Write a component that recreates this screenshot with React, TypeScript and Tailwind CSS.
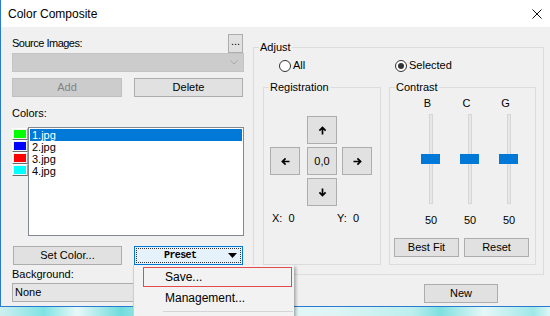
import React from 'react';

type BtnProps = {
  className?: string;
  disabled?: boolean;
  children?: React.ReactNode;
};

function Btn({ className = '', disabled, children }: BtnProps) {
  return (
    <button
      type="button"
      className={`flex items-center justify-center border text-[11px] leading-[13px] ${
        disabled
          ? 'bg-[#cccccc] border-[#bfbfbf] text-[#838383]'
          : 'bg-[#e1e1e1] border-[#adadad] text-black'
      } ${className}`}
    >
      {children}
    </button>
  );
}

function Group({
  label,
  className = '',
  children,
}: {
  label: string;
  className?: string;
  children?: React.ReactNode;
}) {
  return (
    <fieldset className={`border border-[#dcdcdc] m-0 p-0 min-w-0 ${className}`}>
      <legend className="ml-[5px] px-[1px] text-[11px] leading-[13px]">{label}</legend>
      {children}
    </fieldset>
  );
}

function Arrow({ dir }: { dir: 'up' | 'down' | 'left' | 'right' }) {
  const rot = { up: 0, right: 90, down: 180, left: 270 }[dir];
  return (
    <svg width="9" height="9" viewBox="0 0 9 9" style={{ transform: `rotate(${rot}deg)` }}>
      <path d="M4.5 8.5V1.4M1.4 4.6L4.5 1.4L7.6 4.6" fill="none" stroke="#000" strokeWidth="1.7" />
    </svg>
  );
}

function Radio({ checked, label }: { checked?: boolean; label: string }) {
  return (
    <div className="flex items-center gap-[2px] text-[11px] leading-[13px]">
      <span className="w-[12px] h-[12px] rounded-full border border-[#333] bg-white flex items-center justify-center">
        {checked && <span className="w-[6px] h-[6px] rounded-full bg-[#333]" />}
      </span>
      <span>{label}</span>
    </div>
  );
}

function Slider() {
  return (
    <div className="w-[20px] flex flex-col items-center">
      <div className="relative w-[4px] h-[90px] bg-[#e7e7e7] border border-[#d6d6d6] mt-[4px]">
        <div className="absolute left-[-9px] top-[39px] w-[19px] h-[10px] bg-[#0078d7]" />
      </div>
    </div>
  );
}

const swatches = ['#00ff00', '#0000ff', '#ff0000', '#00ffff'];
const files = ['1.jpg', '2.jpg', '3.jpg', '4.jpg'];

export default function App() {
  return (
    <div className="relative w-[550px] h-[316px] overflow-hidden font-['Liberation_Sans',Arial,sans-serif] text-black bg-[linear-gradient(90deg,#cfeff0_0%,#7fe3e3_8%,#e9f8f8_14%,#6fdcdc_22%,#eaf9f9_32%,#dff5f5_60%,#bdeeee_75%,#7fe0e0_80%,#e6f7f7_88%,#9fe8e8_97%,#e0f6f6_100%)]">
      <div className="h-[307px] flex flex-col border-l border-b border-[#2a7ad2]">
        {/* title bar */}
        <div className="h-[27px] bg-white flex items-center justify-between pl-[7px] pr-[8px]">
          <span className="text-[12px] leading-[14px]">Color Composite</span>
          <svg width="10" height="10" viewBox="0 0 10 10">
            <path d="M0.5 0.5L9.5 9.5M9.5 0.5L0.5 9.5" stroke="#111" strokeWidth="1" />
          </svg>
        </div>

        <div className="flex-1 bg-[#f0f0f0] flex pl-[11px]">
          {/* left column */}
          <div className="w-[232px] flex flex-col pt-[7px] text-[11px] leading-[13px]">
            <div className="h-[18px] flex items-center justify-between">
              <span className="tracking-[-0.5px]">Source Images:</span>
              <Btn className="w-[15px] h-[19px] mr-[1px] pb-[3px]">...</Btn>
            </div>
            <div className="mt-[1px] h-[19px] bg-[#cccccc] border border-[#c4c4c4] flex items-center justify-end pr-[5px]">
              <svg width="8" height="5" viewBox="0 0 8 5">
                <path d="M0.5 0.5L4 4L7.5 0.5" fill="none" stroke="#a8a8a8" strokeWidth="1" />
              </svg>
            </div>
            <div className="mt-[6px] flex gap-[12px]">
              <Btn disabled className="w-[110px] h-[19px]">Add</Btn>
              <Btn className="w-[109px] h-[19px]">Delete</Btn>
            </div>
            <div className="mt-[10px] h-[13px]">Colors:</div>
            <div className="mt-[7px] flex h-[109px]">
              <div className="w-[16px] flex flex-col pt-[1px]">
                {swatches.map((c) => (
                  <div
                    key={c}
                    className="h-[12px] w-[16px] border border-t-white border-l-white border-r-[#a0a0a0] border-b-[#6a6a6a] bg-[#f0f0f0] p-[1px]"
                  >
                    <div className="w-full h-full" style={{ background: c }} />
                  </div>
                ))}
              </div>
              <div className="flex-1 bg-white border border-[#828790] p-[1px]">
                {files.map((f, i) => (
                  <div
                    key={f}
                    className={`h-[12px] leading-[12px] pl-[2px] ${i === 0 ? 'bg-[#0078d7] text-white' : ''}`}
                  >
                    {f}
                  </div>
                ))}
              </div>
            </div>
            <div className="mt-[10px] flex gap-[12px]">
              <Btn className="w-[109px] h-[19px] ml-[1px]">Set Color...</Btn>
              <button
                type="button"
                className="w-[109px] h-[19px] bg-[#e5f1fb] border border-[#0078d7] p-[1px]"
              >
                <div className="h-full border border-dotted border-[#333] flex items-center pl-[27px] pr-[3px]">
                  <span className="flex-1 text-left font-['Liberation_Mono',monospace] font-semibold text-[10px] tracking-[-0.6px]">
                    Preset
                  </span>
                  <svg width="9" height="5" viewBox="0 0 9 5">
                    <path d="M0 0H9L4.5 5Z" fill="#000" />
                  </svg>
                </div>
              </button>
            </div>
            <div className="mt-[3px] h-[13px]">Background:</div>
            <div className="mt-[2px] h-[19px] bg-[#e5e5e5] border border-[#adadad] flex items-center pl-[2px]">
              None
            </div>
          </div>

          {/* right column */}
          <div className="ml-[9px] w-[291px] flex flex-col pt-[14px]">
            <Group label="Adjust" className="h-[234px]">
              <div className="flex pt-[5px] pl-[25px] h-[18px]">
                <div className="w-[116px]">
                  <Radio label="All" />
                </div>
                <Radio checked label="Selected" />
              </div>
              <div className="flex gap-[8px] pl-[9px] mt-[9px]">
                <Group label="Registration" className="w-[118px] h-[184px]">
                  <div className="pt-[22px] pl-[6px] flex flex-col gap-[3px]">
                    <Btn className="ml-[37px] w-[30px] h-[28px]">
                      <Arrow dir="up" />
                    </Btn>
                    <div className="flex">
                      <Btn className="w-[30px] h-[28px]">
                        <Arrow dir="left" />
                      </Btn>
                      <Btn className="ml-[7px] w-[30px] h-[28px]">0,0</Btn>
                      <Btn className="ml-[5px] w-[30px] h-[28px]">
                        <Arrow dir="right" />
                      </Btn>
                    </div>
                    <Btn className="ml-[37px] w-[30px] h-[28px]">
                      <Arrow dir="down" />
                    </Btn>
                    <div className="mt-[3px] flex text-[11px] leading-[13px] pl-[2px]">
                      <span className="w-[65px]">X:&nbsp; 0</span>
                      <span>Y:&nbsp; 0</span>
                    </div>
                  </div>
                </Group>
                <Group label="Contrast" className="w-[147px] h-[184px]">
                  <div className="pt-[3px] pl-[31px] flex gap-[19px] text-[11px] leading-[13px]">
                    {['B', 'C', 'G'].map((l) => (
                      <div key={l} className="w-[20px] flex flex-col items-center">
                        <span className="pr-[7px]">{l}</span>
                        <Slider />
                        <span className="mt-[10px]">50</span>
                      </div>
                    ))}
                  </div>
                  <div className="mt-[11px] ml-[4px] flex gap-[5px]">
                    <Btn className="w-[65px] h-[19px]">Best Fit</Btn>
                    <Btn className="w-[65px] h-[19px]">Reset</Btn>
                  </div>
                </Group>
              </div>
            </Group>
            <Btn className="mt-[9px] ml-[171px] w-[74px] h-[19px]">New</Btn>
          </div>
        </div>
      </div>

      {/* open preset menu */}
      <div className="absolute left-[133px] top-[265px] w-[161px] h-[60px] bg-[#f2f2f2] border-l border-[#cfcfcf] shadow-[2px_2px_3px_rgba(0,0,0,0.3)] text-[12px] leading-[14px]">
        <div className="ml-[9px] mt-[2px] w-[149px] h-[20px] border border-[#e24b4b] flex items-center pl-[21px]">
          Save...
        </div>
        <div className="mt-[2px] h-[18px] flex items-center pl-[31px]">Management...</div>
        <div className="mt-[4px] ml-[29px] w-[130px] h-px bg-[#d5d5d5]" />
      </div>
    </div>
  );
}
